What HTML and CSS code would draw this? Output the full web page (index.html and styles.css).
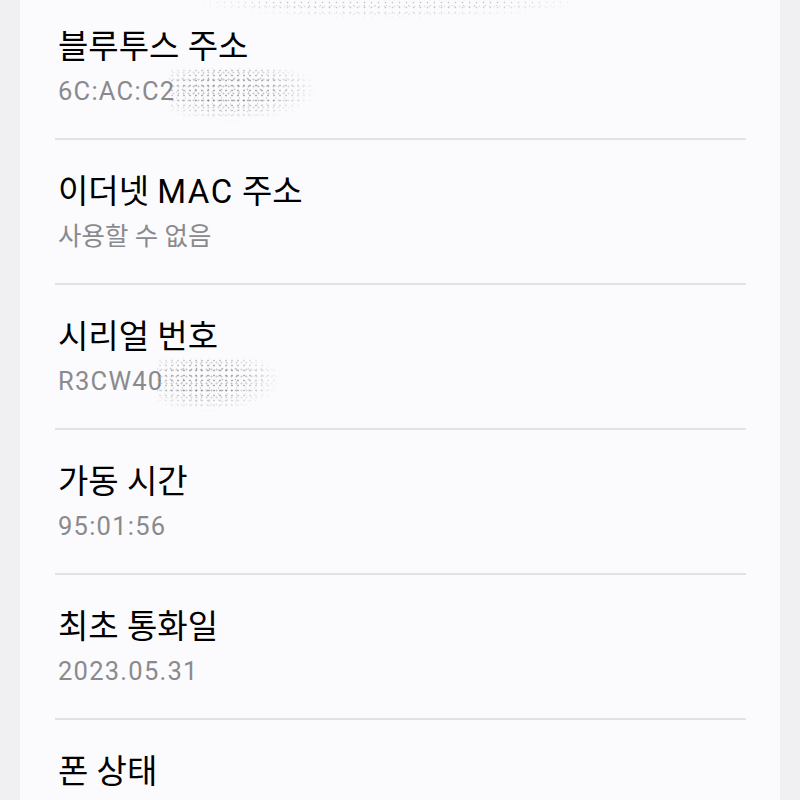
FILE: index.html
```html
<!DOCTYPE html>
<html lang="ko">
<head>
<meta charset="utf-8">
<link rel="stylesheet" href="styles.css">
</head>
<body>
<div class="card">
  <div class="top-noise"></div>
  <div class="row first">
    <div class="title">블루투스 주소</div>
    <div class="value">6C:AC:C2<span class="noise n1"></span></div>
  </div>
  <div class="row">
    <div class="title">이더넷 <span class="lat">MAC</span> 주소</div>
    <div class="value ko">사용할 수 없음</div>
  </div>
  <div class="row">
    <div class="title">시리얼 번호</div>
    <div class="value">R3CW40<span class="noise n2"></span></div>
  </div>
  <div class="row">
    <div class="title">가동 시간</div>
    <div class="value">95:01:56</div>
  </div>
  <div class="row">
    <div class="title">최초 통화일</div>
    <div class="value">2023.05.31</div>
  </div>
  <div class="row last">
    <div class="title">폰 상태</div>
  </div>
</div>
</body>
</html>
```
FILE: styles.css
```css
html, body {
  margin: 0;
  padding: 0;
  background: #f0f0f2;
  height: 800px;
  overflow: hidden;
}
body {
  font-family: Roboto, "Noto Sans CJK KR", sans-serif;
}
.card {
  margin: 0 20px;
  height: 800px;
  background: #fbfbfd;
  overflow: hidden;
  position: relative;
}
.top-noise {
  position: absolute;
  left: 180px;
  top: 0;
  width: 380px;
  height: 18px;
  background-image:
    radial-gradient(circle, rgba(120,120,120,.4) 0.7px, transparent 1.1px),
    radial-gradient(circle, rgba(150,150,150,.3) 0.7px, transparent 1.1px),
    radial-gradient(circle, rgba(100,100,100,.3) 0.6px, transparent 1px);
  background-size: 7px 5px, 5px 7px, 11px 9px;
  background-position: 0 0, 2px 3px, 5px 1px;
  -webkit-mask-image: radial-gradient(ellipse at center top, #000 40%, transparent 75%);
  mask-image: radial-gradient(ellipse at center top, #000 40%, transparent 75%);
}
.row {
  margin: 0 34px 0 35px;
  padding: 32px 0 32px 3px;
  border-bottom: 2px solid #e2e2e4;
}
.row.first {
  padding-top: 27px;
}
.row.last {
  border-bottom: none;
}
.title {
  font-size: 33px;
  line-height: 40px;
  font-weight: 400;
  color: #000;
}
.lat {
  letter-spacing: 1.5px;
}
.value {
  margin-top: 9px;
  font-size: 25.5px;
  line-height: 30px;
  height: 30px;
  color: #8a8a8e;
  letter-spacing: 1.25px;
  white-space: nowrap;
}
.value.ko {
  letter-spacing: 0;
}
.noise {
  display: inline-block;
  vertical-align: top;
  height: 54px;
  margin: -8px 0 -16px -6px;
  background-image:
    radial-gradient(circle, rgba(90,90,90,.5) 0.8px, transparent 1.2px),
    radial-gradient(circle, rgba(120,120,120,.4) 0.8px, transparent 1.2px),
    radial-gradient(circle, rgba(150,150,150,.35) 0.7px, transparent 1.1px),
    radial-gradient(circle, rgba(70,70,70,.35) 0.7px, transparent 1.1px);
  background-size: 6px 5px, 5px 7px, 9px 6px, 13px 11px;
  background-position: 0 0, 2px 1px, 3px 3px, 7px 5px;
  -webkit-mask-image: radial-gradient(ellipse at 40% 40%, #000 30%, transparent 70%);
  mask-image: radial-gradient(ellipse at 40% 40%, #000 30%, transparent 70%);
}
.n1 { width: 150px; }
.n2 { width: 125px; }
```
